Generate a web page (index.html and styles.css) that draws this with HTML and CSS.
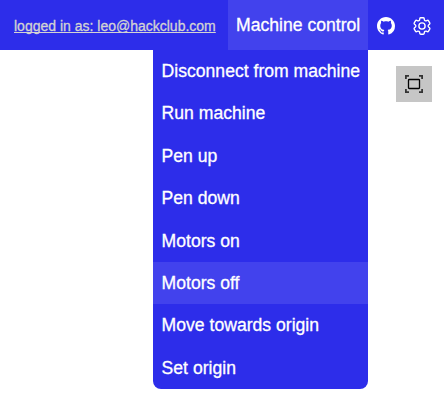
FILE: index.html
```html
<!DOCTYPE html>
<html lang="en">
<head>
<meta charset="utf-8">
<title>Machine control</title>
<link rel="stylesheet" href="styles.css">
</head>
<body>
<header class="toolbar">
  <a class="login">logged in as: leo@hackclub.com</a>
  <div class="dropdown">
    <div class="trigger">Machine control</div>
    <div class="menu">
      <div class="item">Disconnect from machine</div>
      <div class="item">Run machine</div>
      <div class="item">Pen up</div>
      <div class="item">Pen down</div>
      <div class="item">Motors on</div>
      <div class="item active">Motors off</div>
      <div class="item">Move towards origin</div>
      <div class="item">Set origin</div>
    </div>
  </div>
  <a class="icon github">
    <svg width="18" height="18" viewBox="0 0 16 16" fill="#fff"><path d="M8 0C3.58 0 0 3.58 0 8c0 3.54 2.29 6.53 5.47 7.59.4.07.55-.17.55-.38 0-.19-.01-.82-.01-1.49-2.01.37-2.53-.49-2.69-.94-.09-.23-.48-.94-.82-1.13-.28-.15-.68-.52-.01-.53.63-.01 1.08.58 1.23.82.72 1.21 1.87.87 2.33.66.07-.52.28-.87.51-1.07-1.78-.2-3.64-.89-3.64-3.95 0-.87.31-1.59.82-2.15-.08-.2-.36-1.02.08-2.12 0 0 .67-.21 2.2.82.64-.18 1.32-.27 2-.27s1.36.09 2 .27c1.53-1.04 2.2-.82 2.2-.82.44 1.1.16 1.92.08 2.12.51.56.82 1.27.82 2.15 0 3.07-1.87 3.75-3.65 3.95.29.25.54.73.54 1.48 0 1.07-.01 1.93-.01 2.2 0 .21.15.46.55.38A8.01 8.01 0 0 0 16 8c0-4.42-3.58-8-8-8z"/></svg>
  </a>
  <a class="icon gear">
    <svg width="22" height="22" viewBox="0 0 24 24" fill="none" stroke="#fff" stroke-width="1.5" stroke-linecap="round" stroke-linejoin="round"><path d="M9.594 3.94c.09-.542.56-.94 1.11-.94h2.593c.55 0 1.02.398 1.11.94l.213 1.281c.063.374.313.686.645.87.074.04.147.083.22.127.325.196.72.257 1.075.124l1.217-.456a1.125 1.125 0 0 1 1.37.49l1.296 2.247a1.125 1.125 0 0 1-.26 1.431l-1.003.827c-.293.241-.438.613-.43.992a7 7 0 0 1 0 .255c-.008.378.137.75.43.991l1.004.827c.424.35.534.955.26 1.43l-1.298 2.247a1.125 1.125 0 0 1-1.369.491l-1.217-.456c-.355-.133-.75-.072-1.076.124a7 7 0 0 1-.22.128c-.331.183-.581.495-.644.869l-.213 1.281c-.09.543-.56.94-1.11.94h-2.594c-.55 0-1.019-.398-1.11-.94l-.213-1.281c-.062-.374-.312-.686-.644-.87a7 7 0 0 1-.22-.127c-.325-.196-.72-.257-1.076-.124l-1.217.456a1.125 1.125 0 0 1-1.369-.49l-1.297-2.247a1.125 1.125 0 0 1 .26-1.431l1.004-.827c.292-.24.437-.613.43-.991a7 7 0 0 1 0-.255c.007-.38-.138-.751-.43-.992l-1.004-.827a1.125 1.125 0 0 1-.26-1.43l1.297-2.247a1.125 1.125 0 0 1 1.37-.491l1.216.456c.356.133.751.072 1.076-.124q.108-.066.22-.128c.332-.183.582-.495.644-.869z"/><circle cx="12" cy="12" r="3.4"/></svg>
  </a>
</header>
<main class="canvas">
  <button class="fit">
    <svg width="18" height="18" viewBox="0 0 18 18" fill="none"><path d="M.9 4V.9H4M14 .9h3.100V4M17.100 14v3.100H14M4 17.100H.9V14" stroke="#333" stroke-width="1.800"/><rect x="3.500" y="4.500" width="11" height="9" rx=".8" stroke="#000" stroke-width="1.300"/></svg>
  </button>
</main>
</body>
</html>
```
FILE: styles.css
```css
body {
  margin: 0;
  background: #fff;
  font-family: "Liberation Sans", Arial, sans-serif;
}

.toolbar {
  display: flex;
  align-items: center;
  height: 50px;
  background: #2d2dea;
  color: #fff;
  -webkit-text-stroke: 0.3px currentColor;
}

.login {
  width: 214px;
  box-sizing: border-box;
  padding: 1px 0 0 14px;
  margin-right: 14px;
  font-size: 14px;
  color: #d3d3d3;
  text-decoration: underline;
  text-decoration-skip-ink: none;
  white-space: nowrap;
}

.dropdown {
  position: relative;
  width: 140px;
  height: 50px;
  font-size: 17.6px;
  white-space: nowrap;
}

.trigger {
  height: 50px;
  padding-left: 8px;
  line-height: 51px;
  background: #4242ed;
}

.menu {
  position: absolute;
  top: 50px;
  right: 0;
  width: 215px;
  overflow: hidden;
  border-radius: 0 0 8px 8px;
  background: #2d2dea;
}

.item {
  height: 42.4px;
  padding-left: 8.6px;
  line-height: 42.6px;
}

.active {
  background: #4242ed;
}

.icon {
  display: flex;
  align-items: center;
  justify-content: center;
  width: 36px;
  height: 50px;
  padding-top: 2px;
  box-sizing: border-box;
}

.canvas {
  display: flex;
  justify-content: flex-end;
  align-items: flex-start;
  box-sizing: border-box;
  min-height: 359px;
  padding: 16px 12px 0 0;
}

.fit {
  display: flex;
  align-items: center;
  justify-content: center;
  width: 36px;
  height: 36px;
  padding: 0;
  border: 0;
  background: #c6c6c6;
}
```
